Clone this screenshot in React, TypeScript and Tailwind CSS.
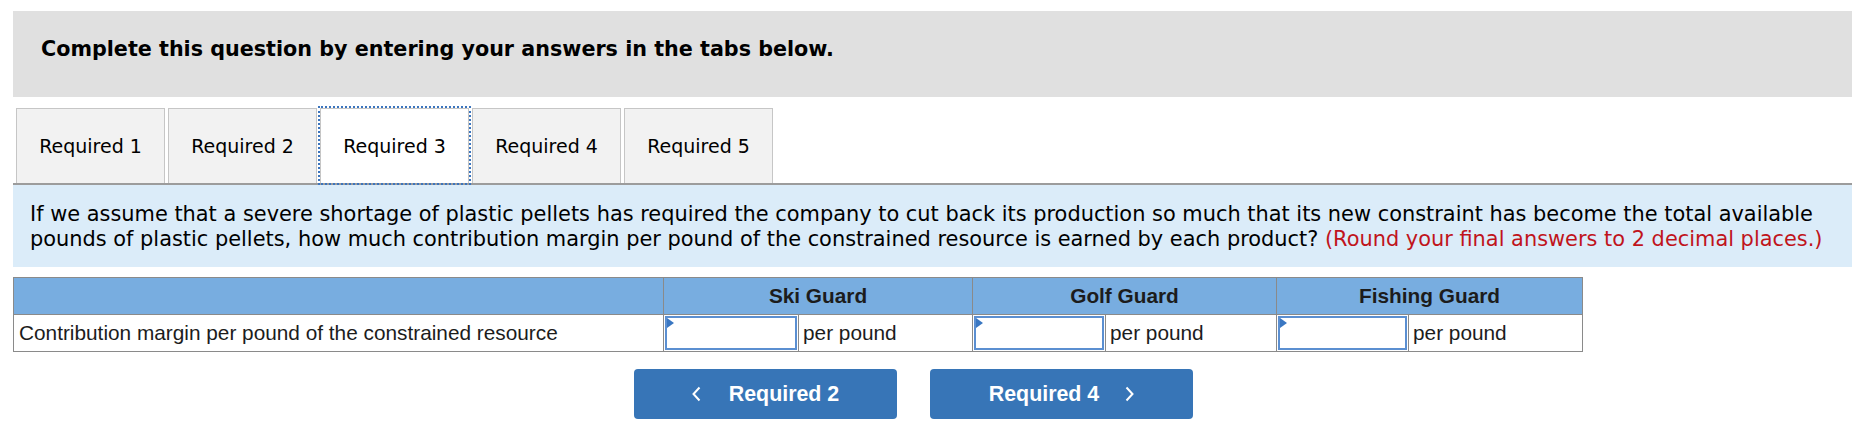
const tabs = ["Required 1", "Required 2", "Required 3", "Required 4", "Required 5"];

const groups = [
  { name: "Ski Guard", input: "w-[135px]", unit: "w-[174px]" },
  { name: "Golf Guard", input: "w-[133px]", unit: "w-[171px]" },
  { name: "Fishing Guard", input: "w-[132px]", unit: "w-[174px]" }
];

function AnswerInput() {
  return (
    <div className="relative h-[34px] border-2 border-[#5b8fd1] bg-white">
      <span className="absolute left-0 top-0 h-0 w-0 border-y-[5px] border-l-[7px] border-y-transparent border-l-[#3a77c2]" />
    </div>
  );
}

function Chevron({ dir }: { dir: "left" | "right" }) {
  return (
    <svg width="9" height="16" viewBox="0 0 9 16" fill="none" stroke="currentColor" strokeWidth="2">
      {dir === "left" ? <polyline points="7.5,1.5 1.5,8 7.5,14.5" /> : <polyline points="1.5,1.5 7.5,8 1.5,14.5" />}
    </svg>
  );
}

export default function App() {
  return (
    <div className="h-[432px] w-[1858px] bg-white pl-[13px] pr-[6px] pt-[11px] text-black">
      <div className="h-[86px] bg-[#e0e0e0] pl-[28px] pt-[26px]">
        <h2 className="font-['DejaVu_Sans',Verdana,sans-serif] text-[20.7px] font-bold leading-[24px]">
          Complete this question by entering your answers in the tabs below.
        </h2>
      </div>

      <div className="mt-[11px] flex gap-[3px] border-b-2 border-[#9c9c9c] pl-[3px]">
        {tabs.map((t, i) => (
          <div
            key={t}
            className={`flex h-[75px] w-[149px] items-center justify-center border border-b-0 border-[#c6c6c6] font-['DejaVu_Sans',Verdana,sans-serif] text-[19px] ${
              i === 2 ? "bg-white outline-2 outline-dotted outline-[#3b74bd]" : "bg-[#f2f2f2]"
            }`}
          >
            {t}
          </div>
        ))}
      </div>

      <div className="h-[82px] bg-[#dbecf9] pl-[17px] pr-[10px] pt-[17px] font-['DejaVu_Sans',Verdana,sans-serif] text-[20.9px] leading-[25px]">
        If we assume that a severe shortage of plastic pellets has required the company to cut back its production so
        much that its new constraint has become the total available pounds of plastic pellets, how much contribution
        margin per pound of the constrained resource is earned by each product?{" "}
        <span className="text-[#c0141c]">(Round your final answers to 2 decimal places.)</span>
      </div>

      <table className="mt-[10px] w-[1569px] table-fixed border-collapse font-['Liberation_Sans',Arial,sans-serif] text-[20.8px] text-[#1c1c1c]">
        <colgroup>
          <col className="w-[650px]" />
          {groups.map((g) => [
            <col key={g.name + "i"} className={g.input} />,
            <col key={g.name + "u"} className={g.unit} />
          ])}
        </colgroup>
        <thead>
          <tr className="h-[37px] bg-[#78ade0]">
            <th className="border border-[#8a8a8a]" />
            {groups.map((g) => (
              <th key={g.name} colSpan={2} className="border border-[#8a8a8a] text-center font-bold">
                {g.name}
              </th>
            ))}
          </tr>
        </thead>
        <tbody>
          <tr className="h-[37px]">
            <td className="border border-[#8a8a8a] pl-[5px] text-left">
              Contribution margin per pound of the constrained resource
            </td>
            {groups.map((g) => [
              <td key={g.name + "i"} className="border border-[#8a8a8a] p-px">
                <AnswerInput />
              </td>,
              <td key={g.name + "u"} className="border border-[#8a8a8a] pl-[4px] text-left">
                per pound
              </td>
            ])}
          </tr>
        </tbody>
      </table>

      <div className="mt-[17px] flex gap-[33px] pl-[621px] font-['Liberation_Sans',Arial,sans-serif] text-[21.4px] font-bold text-white">
        <button className="flex h-[50px] w-[263px] items-center justify-center gap-[28px] rounded-[4px] bg-[#3775b7]">
          <Chevron dir="left" />
          <span>Required 2</span>
        </button>
        <button className="flex h-[50px] w-[263px] items-center justify-center gap-[26px] rounded-[4px] bg-[#3775b7]">
          <span>Required 4</span>
          <Chevron dir="right" />
        </button>
      </div>
    </div>
  );
}
